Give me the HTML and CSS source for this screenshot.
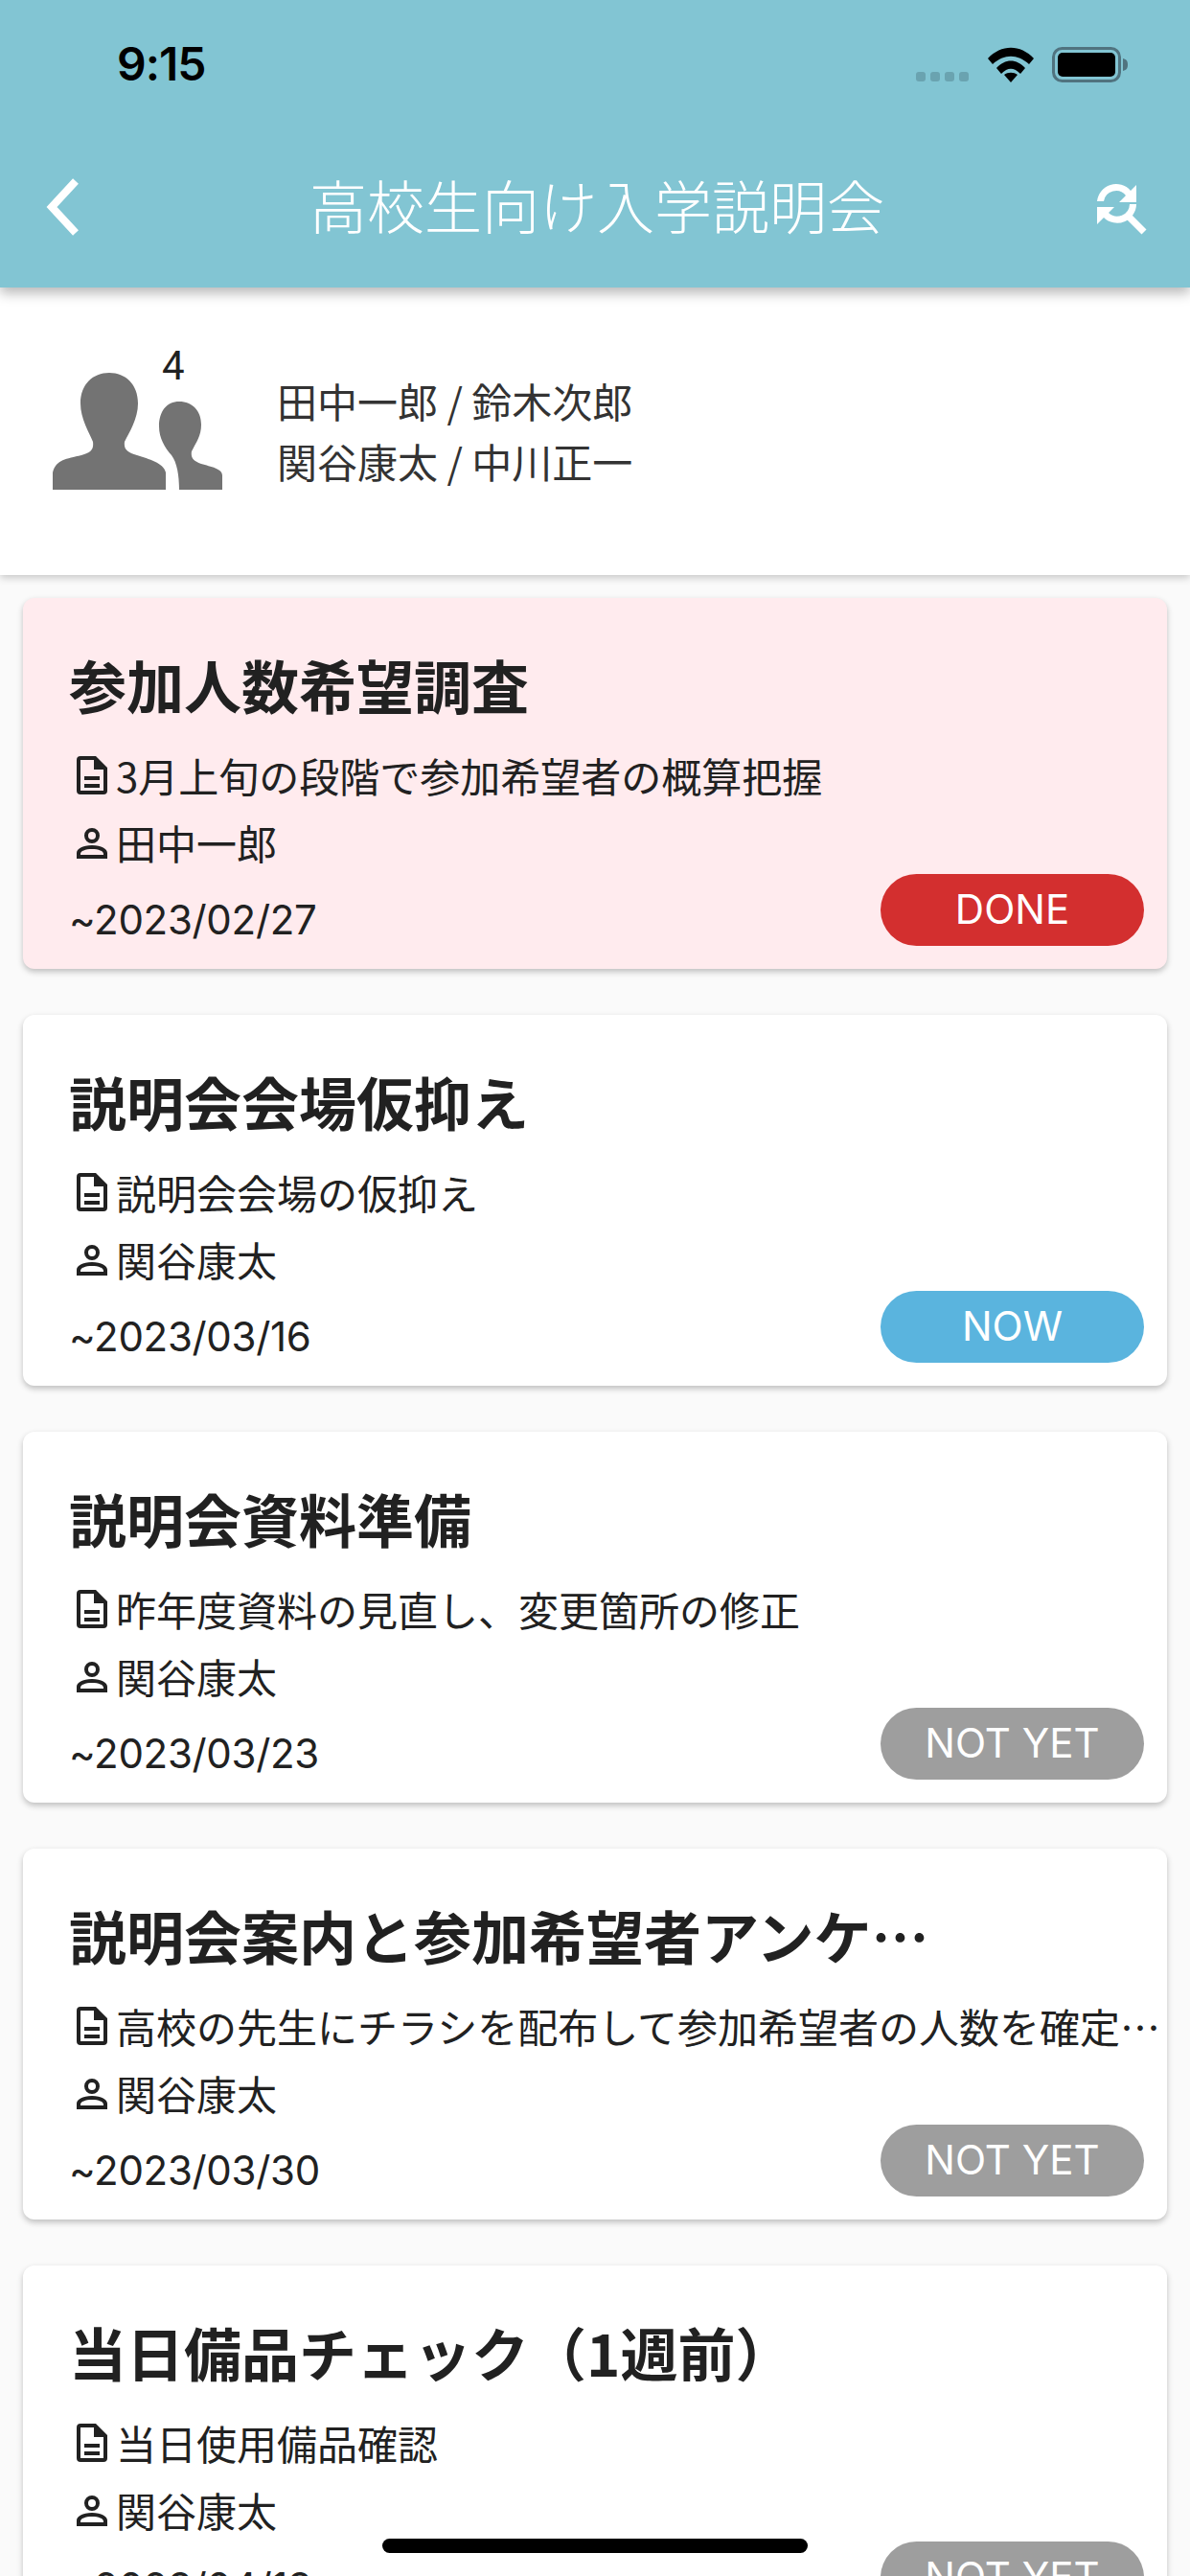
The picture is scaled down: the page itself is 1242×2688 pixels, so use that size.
FILE: index.html
```html
<!DOCTYPE html>
<html lang="ja">
<head>
<meta charset="utf-8">
<title>高校生向け入学説明会</title>
<link rel="stylesheet" href="styles.css">
</head>
<body>
<div class="screen">
  <header class="appbar">
    <div class="status">
      <span class="time">9:15</span>
      <div class="status-icons">
        <div class="dots"><i></i><i></i><i></i><i></i></div>
        <svg class="wifi" width="48" height="37" viewBox="0 0 48 37"><path d="M0 12 C14 -3 34 -3 48 12 L43 18 C31 7 17 7 5 18Z M9 22 C18 12 30 12 39 22 L34 28 C27 21 21 21 14 28Z M17 29 C21 26 27 26 31 29 L24 37Z" fill="#000"/></svg>
        <svg class="battery" width="80" height="37" viewBox="0 0 80 37"><rect x="1.500" y="1.500" width="69" height="34" rx="9" fill="none" stroke="#50737f" stroke-width="3"/><rect x="6" y="6" width="60" height="25" rx="5" fill="#000"/><path d="M74 12 C78 13 79 15 79 18.500 C79 22 78 24 74 25Z" fill="#50737f"/></svg>
      </div>
    </div>
    <div class="nav">
      <svg class="back" width="36" height="60" viewBox="0 0 36 60"><path d="M31 3 L6 30 L31 57" fill="none" stroke="#fff" stroke-width="8"/></svg>
      <h1 class="nav-title">高校生向け入学説明会</h1>
      <svg class="refresh" width="54" height="54" viewBox="0 0 54 54"><path d="M1 18 A20 20 0 0 1 36 7 L42 1 V19 H24 L31 12 A13 13 0 0 0 8 18Z M42 21 A20 20 0 0 1 8 35 L1 42 V24 H19 L13 30 A13 13 0 0 0 35 21Z" fill="#fff"/><path d="M34 34 L50 50" stroke="#fff" stroke-width="7" fill="none"/></svg>
    </div>
  </header>

  <section class="members">
    <div class="group">
      <span class="count">4</span>
      <svg class="group-icon" width="178" height="123" viewBox="0 0 178 123"><path d="M59 0 C42 0 29 12 29 32 C29 48 38 62 42 72 C43 80 40 83 30 86 C14 90 4 90 0 104 V122 H118 V104 C116 94 100 90 88 86 C78 83 74 80 75 72 C80 62 89 48 89 32 C89 12 76 0 59 0Z" fill="#737373"/><path d="M132 30 C119 30 111 40 111 56 C111 68 117 78 124 86 C130 94 132 108 132 122 H177 V107 C177 100 165 98 155 95 C146 92 144 88 145 82 C150 72 155 66 155 54 C155 40 146 30 132 30Z" fill="#737373"/></svg>
    </div>
    <div class="names">
      <div>田中一郎 / 鈴木次郎</div>
      <div>関谷康太 / 中川正一</div>
    </div>
  </section>

  <main class="list">
    <article class="card card-done">
      <h2 class="card-title">参加人数希望調査</h2>
      <div class="row"><svg class="ic" viewBox="0 0 32 40"><use href="#doc"/></svg><span class="row-text">3月上旬の段階で参加希望者の概算把握</span></div>
      <div class="row"><svg class="ic" viewBox="0 0 32 40"><use href="#person"/></svg><span class="row-text">田中一郎</span></div>
      <div class="foot"><span class="date">~2023/02/27</span><span class="pill pill-done">DONE</span></div>
    </article>
    <article class="card">
      <h2 class="card-title">説明会会場仮抑え</h2>
      <div class="row"><svg class="ic" viewBox="0 0 32 40"><use href="#doc"/></svg><span class="row-text">説明会会場の仮抑え</span></div>
      <div class="row"><svg class="ic" viewBox="0 0 32 40"><use href="#person"/></svg><span class="row-text">関谷康太</span></div>
      <div class="foot"><span class="date">~2023/03/16</span><span class="pill pill-now">NOW</span></div>
    </article>
    <article class="card">
      <h2 class="card-title">説明会資料準備</h2>
      <div class="row"><svg class="ic" viewBox="0 0 32 40"><use href="#doc"/></svg><span class="row-text">昨年度資料の見直し、変更箇所の修正</span></div>
      <div class="row"><svg class="ic" viewBox="0 0 32 40"><use href="#person"/></svg><span class="row-text">関谷康太</span></div>
      <div class="foot"><span class="date">~2023/03/23</span><span class="pill pill-yet">NOT YET</span></div>
    </article>
    <article class="card">
      <h2 class="card-title">説明会案内と参加希望者アンケート実施</h2>
      <div class="row"><svg class="ic" viewBox="0 0 32 40"><use href="#doc"/></svg><span class="row-text">高校の先生にチラシを配布して参加希望者の人数を確定する</span></div>
      <div class="row"><svg class="ic" viewBox="0 0 32 40"><use href="#person"/></svg><span class="row-text">関谷康太</span></div>
      <div class="foot"><span class="date">~2023/03/30</span><span class="pill pill-yet">NOT YET</span></div>
    </article>
    <article class="card">
      <h2 class="card-title">当日備品チェック（1週前）</h2>
      <div class="row"><svg class="ic" viewBox="0 0 32 40"><use href="#doc"/></svg><span class="row-text">当日使用備品確認</span></div>
      <div class="row"><svg class="ic" viewBox="0 0 32 40"><use href="#person"/></svg><span class="row-text">関谷康太</span></div>
      <div class="foot"><span class="date">~2023/04/13</span><span class="pill pill-yet">NOT YET</span></div>
    </article>
  </main>

  <div class="home-bar"></div>

  <svg class="defs" width="0" height="0">
    <symbol id="doc" viewBox="0 0 32 40"><path fill-rule="evenodd" d="M4 0 H20 L32 12 V36 A4 4 0 0 1 28 40 H4 A4 4 0 0 1 0 36 V4 A4 4 0 0 1 4 0Z M4 4 V36 H28 V14 H18 V4Z M8 21 H24 V25 H8Z M8 29 H24 V33 H8Z" fill="#212121"/></symbol>
    <symbol id="person" viewBox="0 0 32 40"><path fill-rule="evenodd" d="M16 5 A8 8 0 1 1 16 21 A8 8 0 0 1 16 5Z M16 9 A4 4 0 1 0 16 17 A4 4 0 0 0 16 9Z M16 23 C26 23 32 27 32 31 V37 H0 V31 C0 27 6 23 16 23Z M16 27 C9 27 4 29 4 32 V33 H28 V32 C28 29 23 27 16 27Z" fill="#212121"/></symbol>
  </svg>
</div>
</body>
</html>
```
FILE: styles.css
```css
* { box-sizing: border-box; }
html, body { margin: 0; padding: 0; }
body { background: #fafafa; color: #212121; font-family: "Noto Sans CJK JP", "Noto Sans", sans-serif; }
.screen { position: relative; width: 1242px; height: 2688px; overflow: hidden; display: flex; flex-direction: column; background: #fafafa; }

.appbar { flex: none; height: 300px; background: #82c5d3; box-shadow: 0 6px 12px rgba(0,0,0,.28); position: relative; z-index: 2; display: flex; flex-direction: column; }
.status { height: 132px; display: flex; justify-content: space-between; padding: 39px 64px 0 122px; }
.time { font-family: Inter, "Liberation Sans", sans-serif; font-weight: 600; font-size: 48px; line-height: 56px; color: #000; letter-spacing: -1px; }
.status-icons { display: flex; align-items: flex-start; padding-top: 10px; }
.dots { display: flex; gap: 5px; margin-top: 26px; margin-right: 20px; }
.dots i { display: block; width: 10px; height: 10px; border-radius: 3px; background: #6aa3b0; }
.wifi { margin-right: 19px; }

.nav { flex: 1; display: grid; grid-template-columns: 1fr auto 1fr; align-items: start; padding: 54px 44px 0 48px; }
.back { justify-self: start; }
.nav-title { margin: -6px 0 0; color: #fff; font-weight: 300; font-size: 60px; line-height: 66px; }
.refresh { justify-self: end; margin-top: 6px; }

.members { flex: none; height: 300px; background: #fff; box-shadow: 0 3px 8px rgba(0,0,0,.2); position: relative; z-index: 1; display: flex; padding: 62px 0 0 55px; }
.group { position: relative; width: 178px; height: 150px; margin-right: 56px; display: flex; align-items: flex-end; }
.group-icon { display: block; }
.count { position: absolute; left: 114px; top: -4px; font-family: Roboto, sans-serif; font-size: 42px; line-height: 48px; }
.names { font-size: 42px; line-height: 63px; color: #333; margin-top: 24px; white-space: nowrap; }

.list { flex: none; display: flex; flex-direction: column; gap: 48px; padding: 24px 24px 0; }
.card { flex: none; height: 387px; background: #fff; border-radius: 12px; box-shadow: 0 3px 6px rgba(0,0,0,.24); padding: 45px 0 0 48px; display: flex; flex-direction: column; }
.card-done { background: #ffebee; }
.card-title { margin: 0; height: 90px; width: 900px; font-size: 60px; line-height: 90px; font-weight: 700; white-space: nowrap; overflow: hidden; text-overflow: ellipsis; }
.row { display: flex; align-items: center; height: 63px; margin-top: 7px; padding-left: 8px; gap: 9px; }
.card-title + .row { margin-top: 18px; }
.ic { flex: none; width: 32px; height: 40px; }
.row-text { flex: 1; min-width: 0; font-size: 42px; line-height: 63px; white-space: nowrap; overflow: hidden; text-overflow: ellipsis; margin-right: 6px; }
.foot { display: flex; justify-content: space-between; align-items: flex-end; margin-top: 2px; padding-right: 24px; }
.date { font-family: Inter, Roboto, sans-serif; font-size: 42px; line-height: 48px; margin-bottom: 3px; letter-spacing: -0.3px; }
.pill { flex: none; width: 275px; height: 75px; border-radius: 38px; display: flex; align-items: center; justify-content: center; color: #fff; font-family: Inter, Roboto, sans-serif; font-size: 42px; padding-bottom: 2px; }
.pill-done { background: #d32f2f; }
.pill-now { background: #5ab4de; }
.pill-yet { background: #9e9e9e; }

.home-bar { position: absolute; left: 399px; top: 2649px; width: 444px; height: 15px; border-radius: 8px; background: #000; z-index: 5; }
.defs { position: absolute; }
```
